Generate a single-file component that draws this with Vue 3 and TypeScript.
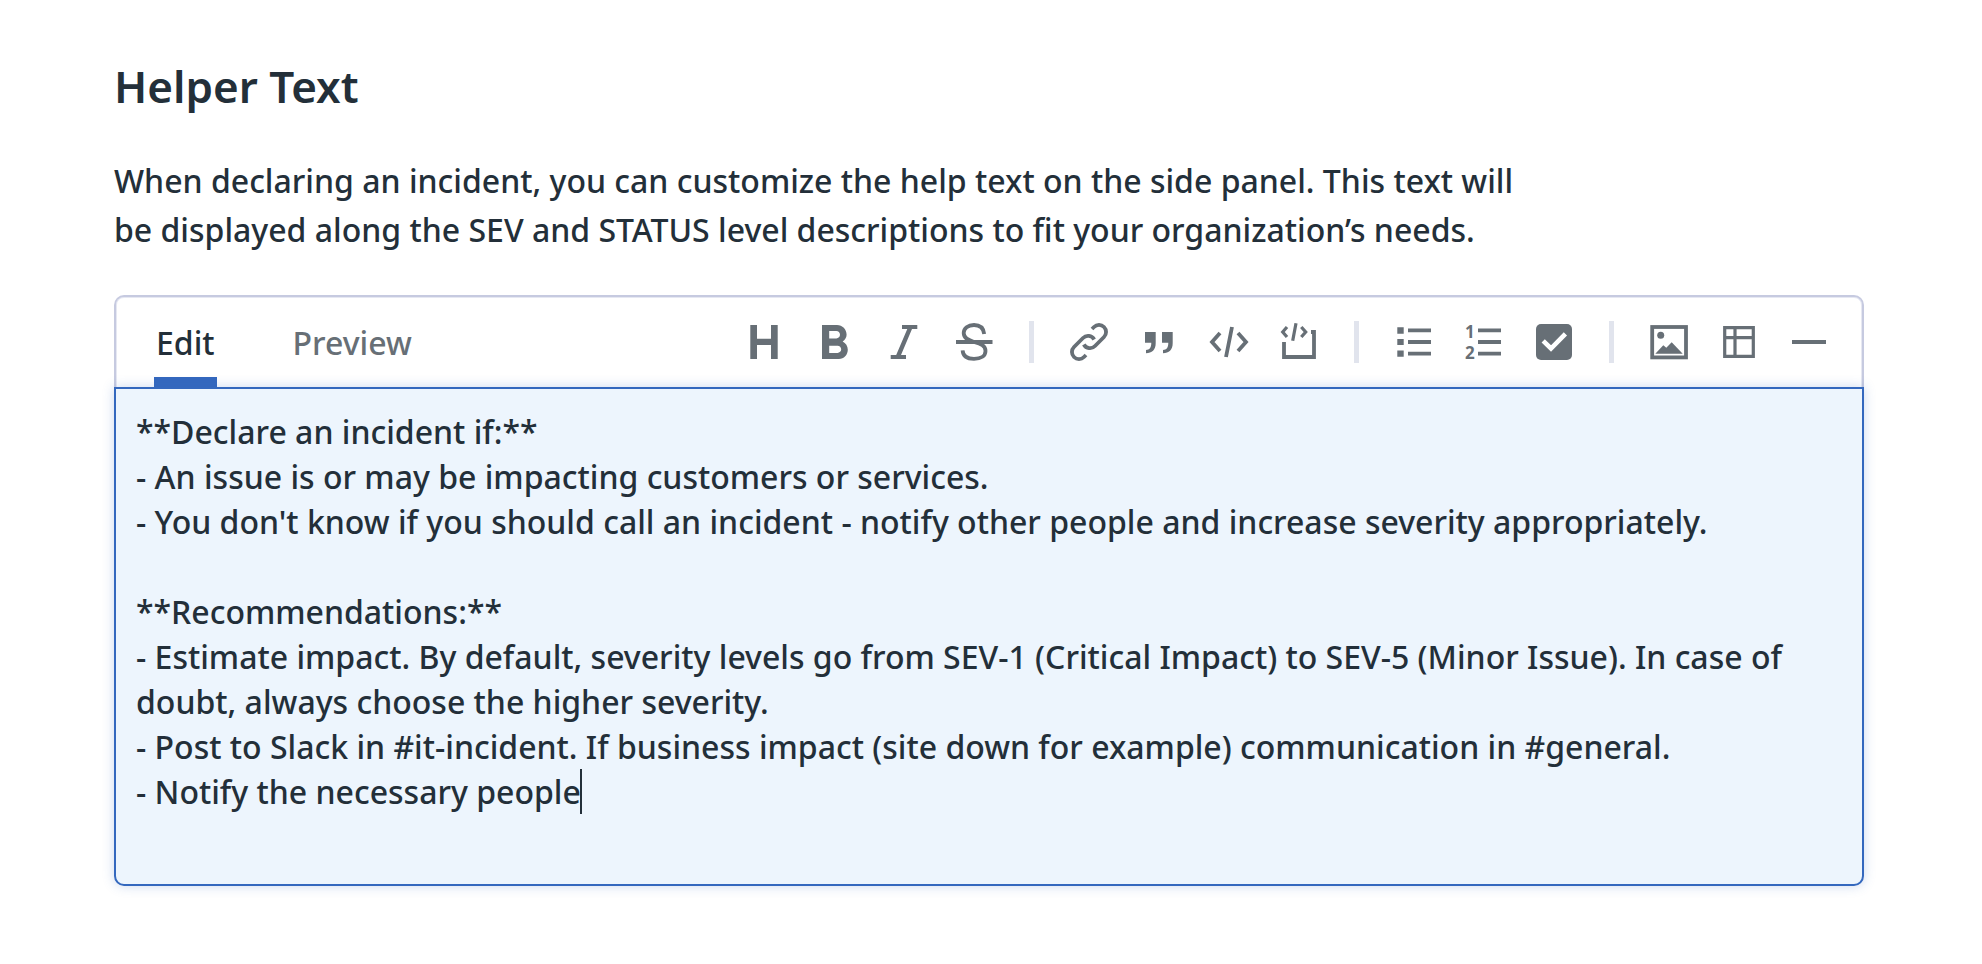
<script setup lang="ts">
import { ref } from 'vue'

type Tab = 'Edit' | 'Preview'

const tabs: Tab[] = ['Edit', 'Preview']
const activeTab = ref<Tab>('Edit')

const text = ref(`**Declare an incident if:**
- An issue is or may be impacting customers or services.
- You don't know if you should call an incident - notify other people and increase severity appropriately.

**Recommendations:**
- Estimate impact. By default, severity levels go from SEV-1 (Critical Impact) to SEV-5 (Minor Issue). In case of doubt, always choose the higher severity.
- Post to Slack in #it-incident. If business impact (site down for example) communication in #general.
- Notify the necessary people`)
</script>

<template>
  <main class="page">
    <h1 class="title">Helper Text</h1>
    <p id="helper-description" class="description">
      When declaring an incident, you can customize the help text on the side panel. This text will
      be displayed along the SEV and STATUS level descriptions to fit your organization’s needs.
    </p>

    <section class="editor">
      <header class="bar">
        <div class="tabs" role="tablist">
          <button
            v-for="tab in tabs"
            :key="tab"
            type="button"
            role="tab"
            class="tab"
            :class="{ active: tab === activeTab }"
            :aria-selected="tab === activeTab"
            @click="activeTab = tab"
          >{{ tab }}</button>
        </div>

        <div class="tools" role="toolbar" aria-label="Formatting">
          <button type="button" class="tool" aria-label="Heading">
            <svg viewBox="0 0 40 40"><path class="fill" d="M6.3 3H13V16.7H27V3H33.7V37H27V23H13V37H6.3Z" /></svg>
          </button>
          <button type="button" class="tool" aria-label="Bold">
            <svg viewBox="0 0 40 40"><path class="fill" transform="translate(-8.8 -6.7) scale(2.4 2.43)" d="M15.6 10.79c.97-.67 1.65-1.77 1.65-2.79 0-2.26-1.75-4-4-4H7v14h7.04c2.09 0 3.71-1.7 3.71-3.79 0-1.52-.86-2.82-2.15-3.42zM10 6.5h3c.83 0 1.5.67 1.5 1.5s-.67 1.5-1.5 1.5h-3v-3zm3.5 9H10v-3h3.5c.83 0 1.5.67 1.5 1.5s-.67 1.5-1.5 1.5z" /></svg>
          </button>
          <button type="button" class="tool" aria-label="Italic">
            <svg viewBox="0 0 40 40"><path class="fill" d="M18 3H33.3V7H28L17 33H22V37H6.7V33H12.2L23.3 7H18Z" /></svg>
          </button>
          <button type="button" class="tool" aria-label="Strikethrough">
            <svg viewBox="0 0 40 40">
              <path class="line" d="M30.2 12C29.5 6 25.5 3 20 3C14 3 9.7 6.3 9.7 11C9.7 16 14 18 20 20C27 21.7 31.5 23.5 31.5 29C31.5 34 27 36.8 20 36.8C13.5 36.8 9 34 8.6 28.3" />
              <path class="line" d="M2 20H38.5" />
            </svg>
          </button>
          <span class="divider"></span>
          <button type="button" class="tool" aria-label="Link">
            <svg viewBox="0 0 40 40"><path class="line" d="M23 7L25 5A7 7 0 0 1 35 15L26 24A7 7 0 0 1 14.8 22.5M17 33L15 35A7 7 0 0 1 5 25L14 16A7 7 0 0 1 25.2 17.5" /></svg>
          </button>
          <button type="button" class="tool" aria-label="Quote">
            <svg viewBox="0 0 40 40"><path class="fill" d="M6 10H16.7V21C16.7 28 13 31 7 31.3V28C10.5 27.7 12.3 26 12.3 20.7H6ZM23 10H33.7V21C33.7 28 30 31 24 31.3V28C27.5 27.7 29.3 26 29.3 20.7H23Z" /></svg>
          </button>
          <button type="button" class="tool" aria-label="Inline code">
            <svg viewBox="0 0 40 40"><path class="line" d="M11 11L3 20L11 29M29 11L37 20L29 29M23 5L17 35" /></svg>
          </button>
          <button type="button" class="tool" aria-label="Code block">
            <svg viewBox="0 0 40 40">
              <path class="line" d="M5 20V35H35V10H32" />
              <path class="line thin" d="M8 5L3.7 10L8 15M22.3 5L26.7 10L22.3 15M17 1.3L13.7 18.7" />
            </svg>
          </button>
          <span class="divider"></span>
          <button type="button" class="tool" aria-label="Bulleted list">
            <svg viewBox="0 0 40 40">
              <path class="fill" d="M3.3 5.3h6.4v6.4h-6.4zM3.3 16.9h6.4v6.2h-6.4zM3.3 28.4h6.4v6.4h-6.4z" />
              <path class="line" d="M14 8.3H37M14 20H37M14 31.7H37" />
            </svg>
          </button>
          <button type="button" class="tool" aria-label="Numbered list">
            <svg viewBox="0 0 40 40">
              <text x="1" y="16">1</text>
              <text x="1" y="37">2</text>
              <path class="line" d="M14 8.3H37M14 20H37M14 31.7H37" />
            </svg>
          </button>
          <button type="button" class="tool" aria-label="Task list">
            <svg viewBox="0 0 40 40">
              <rect class="fill" x="2" y="2" width="36" height="36" rx="5" />
              <path class="check" d="M9.2 18.8L17 26.5L31.4 11.8" />
            </svg>
          </button>
          <span class="divider"></span>
          <button type="button" class="tool" aria-label="Image">
            <svg viewBox="0 0 40 40">
              <rect class="line" x="3.2" y="5" width="33.8" height="30.4" />
              <circle class="fill" cx="11.7" cy="13.3" r="3.5" />
              <path class="fill" d="M6.3 31.7L14.3 23.3L17.3 25.7L22.7 20.3L33.7 31.7Z" />
            </svg>
          </button>
          <button type="button" class="tool" aria-label="Table">
            <svg viewBox="0 0 40 40"><path class="line thin" d="M5.7 5.7H34.3V34.3H5.7ZM16 5.7V34.3M5.7 15.7H34.3" /></svg>
          </button>
          <button type="button" class="tool" aria-label="Horizontal rule">
            <svg viewBox="0 0 40 40"><path class="line" d="M3 20H37" /></svg>
          </button>
        </div>
      </header>

      <div class="field">
        <textarea
          v-model="text"
          class="input"
          aria-label="Helper Text"
          aria-describedby="helper-description"
          spellcheck="false"
        ></textarea>
        <span class="caret" aria-hidden="true"></span>
      </div>
    </section>
  </main>
</template>

<style>
body {
  background: #fff;
}
</style>

<style scoped>
.page {
  padding: 56px 118px 78px 114px;
  color: #232f39;
  font-family: "Noto Sans", sans-serif;
  font-size: 32px;
  font-weight: 500;
}

.title {
  margin: 0 0 40px;
  font-size: 44px;
  font-weight: 600;
  line-height: 60px;
}

.description {
  max-width: 1410px;
  margin: 0 0 41px;
  line-height: 49px;
}

.bar {
  box-sizing: border-box;
  display: flex;
  justify-content: space-between;
  height: 92px;
  padding: 0 18px 0 38px;
  border: 2px solid #c6cae0;
  border-bottom: 0;
  border-radius: 10px 10px 0 0;
  box-shadow: inset 0 1px #e6e8f2, inset 1px 0 #e6e8f2, inset -1px 0 #e6e8f2;
}

.tabs {
  display: flex;
  gap: 74px;
}

.tab {
  padding: 0 2px;
  border: 0;
  border-top: 10px solid transparent;
  border-bottom: 10px solid transparent;
  background: none;
  color: #676f76;
  font: inherit;
  cursor: pointer;
}

.tab.active {
  border-bottom-color: #3468be;
  color: #232f39;
}

.tools {
  display: flex;
  align-items: center;
}

.tool {
  display: flex;
  align-items: center;
  justify-content: center;
  width: 70px;
  height: 70px;
  padding: 0;
  border: 0;
  background: none;
  cursor: pointer;
}

.tool svg {
  width: 40px;
  height: 40px;
  overflow: visible;
}

.tool text {
  fill: #676f76;
  font-family: "Noto Sans", sans-serif;
  font-size: 17px;
  font-weight: 700;
}

.fill {
  fill: #676f76;
}

.line {
  fill: none;
  stroke: #676f76;
  stroke-width: 3.8;
}

.thin {
  stroke-width: 3.2;
}

.check {
  fill: none;
  stroke: #fff;
  stroke-width: 4.6;
}

.divider {
  width: 5px;
  height: 42px;
  margin: 0 20px;
  background: #e1e4ed;
}

.field {
  position: relative;
}

.input {
  box-sizing: border-box;
  display: block;
  width: 100%;
  height: 499px;
  margin: 0;
  padding: 20px;
  border: 2px solid #3468be;
  border-radius: 0 0 10px 10px;
  outline: 0;
  background: #edf5fd;
  box-shadow: 0 0 12px rgba(52, 104, 190, 0.25);
  color: inherit;
  font: inherit;
  line-height: 45px;
  resize: none;
}

.caret {
  position: absolute;
  top: 382px;
  left: 466px;
  width: 2px;
  height: 45px;
  background: #232f39;
  pointer-events: none;
}
</style>
